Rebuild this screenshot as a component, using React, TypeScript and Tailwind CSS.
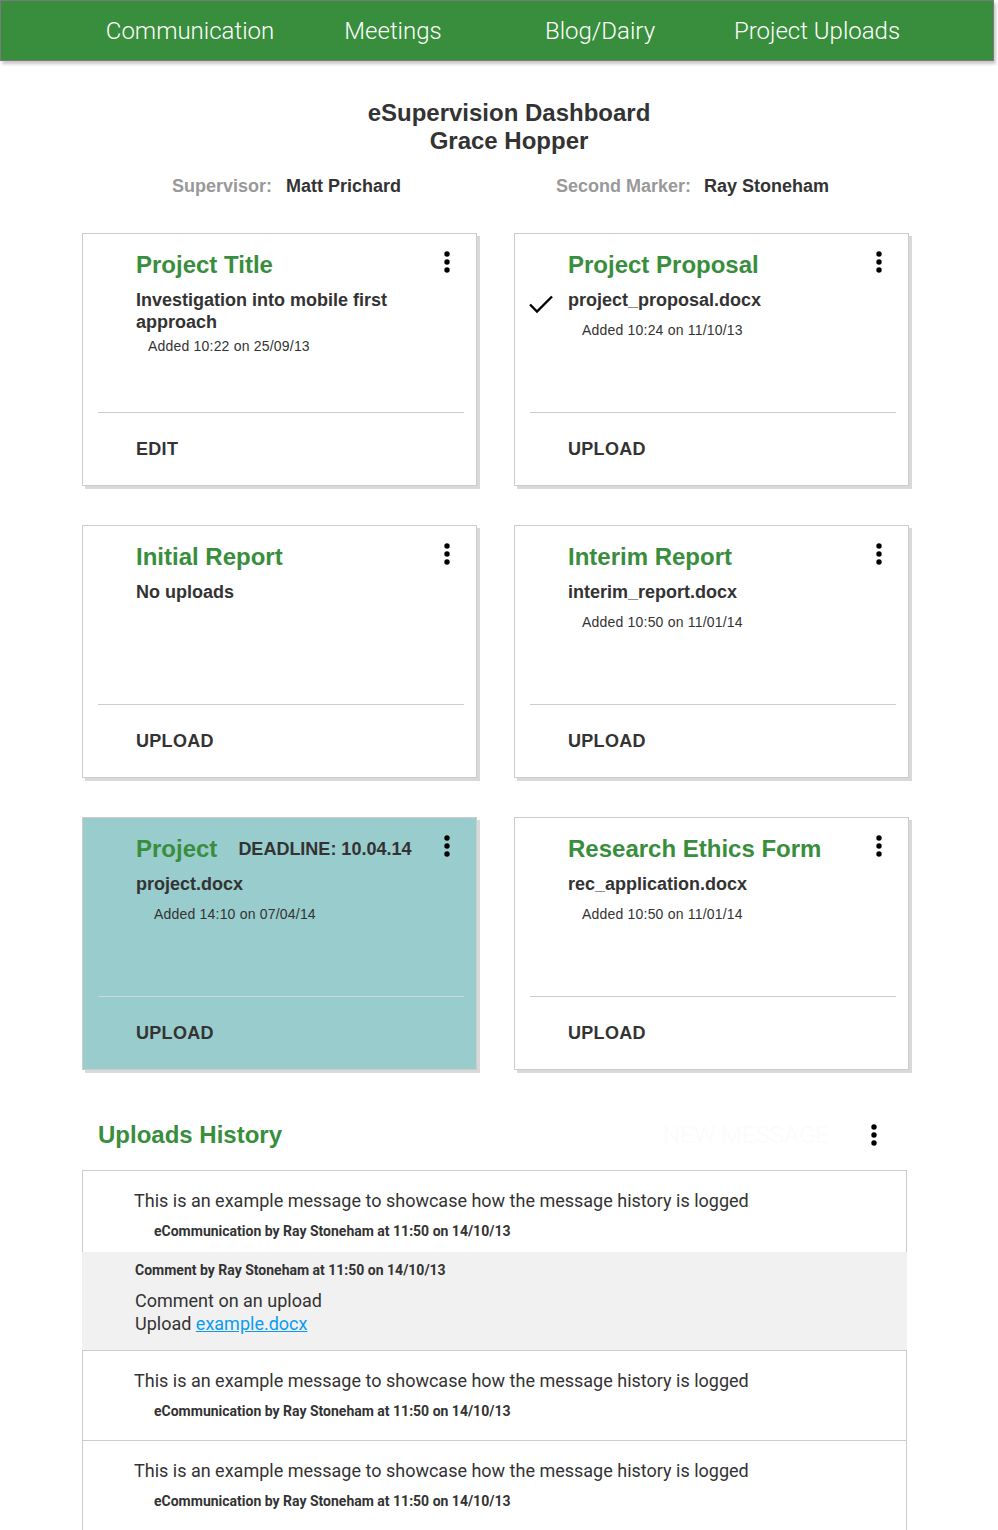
import React from 'react';

const ARIAL = "font-['Liberation_Sans',Arial,sans-serif]";
const ROBOTO = "font-['Roboto','Liberation_Sans',sans-serif]";

const Dots: React.FC = () => (
  <svg width="6" height="22" viewBox="0 0 6 22" className="shrink-0">
    <circle cx="3" cy="3" r="2.7" fill="#000" />
    <circle cx="3" cy="11" r="2.7" fill="#000" />
    <circle cx="3" cy="19" r="2.7" fill="#000" />
  </svg>
);

const Check: React.FC = () => (
  <svg width="26" height="20" viewBox="0 0 26 20" className="absolute left-[-40px] top-[5px]">
    <path d="M2 10.5 L9 17.5 L24 2.5" fill="none" stroke="#000" strokeWidth="2.4" />
  </svg>
);

type Card = {
  title: string;
  deadline?: string;
  lines: string[];
  added?: string;
  addedClass?: string;
  addedIndent: string;
  check?: boolean;
  action: string;
  teal?: boolean;
};

const cards: Card[] = [
  {
    title: 'Project Title',
    lines: ['Investigation into mobile first', 'approach'],
    added: 'Added 10:22 on 25/09/13',
    addedClass: 'mt-[4px]',
    addedIndent: 'pl-[12px]',
    action: 'EDIT',
  },
  {
    title: 'Project Proposal',
    lines: ['project_proposal.docx'],
    added: 'Added 10:24 on 11/10/13',
    addedClass: 'mt-[10px]',
    addedIndent: 'pl-[14px]',
    check: true,
    action: 'UPLOAD',
  },
  { title: 'Initial Report', lines: ['No uploads'], addedIndent: '', action: 'UPLOAD' },
  {
    title: 'Interim Report',
    lines: ['interim_report.docx'],
    added: 'Added 10:50 on 11/01/14',
    addedClass: 'mt-[10px]',
    addedIndent: 'pl-[14px]',
    action: 'UPLOAD',
  },
  {
    title: 'Project',
    deadline: 'DEADLINE: 10.04.14',
    lines: ['project.docx'],
    added: 'Added 14:10 on 07/04/14',
    addedClass: 'mt-[10px]',
    addedIndent: 'pl-[18px]',
    action: 'UPLOAD',
    teal: true,
  },
  {
    title: 'Research Ethics Form',
    lines: ['rec_application.docx'],
    added: 'Added 10:50 on 11/01/14',
    addedClass: 'mt-[10px]',
    addedIndent: 'pl-[14px]',
    action: 'UPLOAD',
  },
];

const DashCard: React.FC<{ card: Card }> = ({ card }) => (
  <div
    className={`h-[253px] flex flex-col border border-[#cccccc] shadow-[3px_3px_0_#d9d9d9] ${
      card.teal ? 'bg-[#99cccc]' : 'bg-white'
    } ${ARIAL} text-[#333333]`}
  >
    <div className="h-[178px]">
      <div className="flex items-start justify-between pl-[53px] pr-[26px] pt-[16px]">
        <div className="flex items-center">
          <h3 className="text-[24px] leading-[30px] font-bold text-[#388e3c]">{card.title}</h3>
          {card.deadline && (
            <span className="ml-[21px] text-[18px] leading-[30px] font-bold">{card.deadline}</span>
          )}
        </div>
        <div className="mt-[1px]">
          <Dots />
        </div>
      </div>
      <div className="pl-[53px] pr-[27px] mt-[9px]">
        <div className="relative">
          {card.check && <Check />}
          {card.lines.map((l) => (
            <p key={l} className="text-[18px] leading-[22px] font-bold">
              {l}
            </p>
          ))}
        </div>
        {card.added && (
          <p className={`${card.addedClass} ${card.addedIndent} text-[14px] leading-[18px] tracking-[0.2px]`}>
            {card.added}
          </p>
        )}
      </div>
    </div>
    <div className={`ml-[15px] mr-[12px] h-px ${card.teal ? 'bg-[#c8dada]' : 'bg-[#cccccc]'}`} />
    <div className="flex-1 flex items-center pl-[53px]">
      <span className="text-[18px] font-bold tracking-[0.3px]">{card.action}</span>
    </div>
  </div>
);

const Message: React.FC<{ last?: boolean; pb: string }> = ({ last, pb }) => (
  <div
    className={`border-x border-t border-[#cccccc] ${last ? 'border-b' : ''} bg-white pl-[51px] pt-[18px] ${pb}`}
  >
    <p className="text-[18px] leading-[24px] text-[#333333]">
      This is an example message to showcase how the message history is logged
    </p>
    <p className="mt-[9px] ml-[20px] text-[14px] leading-[18px] font-bold text-[#333333]">
      eCommunication by Ray Stoneham at 11:50 on 14/10/13
    </p>
  </div>
);

export default function App() {
  return (
    <div className="w-[998px] min-h-[1530px] bg-white overflow-hidden">
      <nav
        className={`w-[994px] h-[61px] bg-[#388e3c] border border-[#7a7a7a] shadow-[2px_3px_3px_rgba(0,0,0,0.22)] flex items-center ${ROBOTO} font-light text-white text-[24px]`}
      >
        <div className="w-[89px]" />
        <div className="w-[200px] text-center">Communication</div>
        <div className="w-[206px] text-center">Meetings</div>
        <div className="w-[208px] text-center">Blog/Dairy</div>
        <div className="w-[226px] text-center">Project Uploads</div>
      </nav>

      <header className={`${ARIAL} text-[#333333] mt-[38px]`}>
        <div className="pl-[20px] text-center text-[24px] leading-[28px] font-bold">
          <h1>eSupervision Dashboard</h1>
          <h2>Grace Hopper</h2>
        </div>
        <div className="mt-[20px] flex pl-[172px] text-[18px] leading-[22px] font-bold">
          <div className="w-[384px] flex gap-[14px]">
            <span className="text-[#999999]">Supervisor:</span>
            <span>Matt Prichard</span>
          </div>
          <div className="flex gap-[13px]">
            <span className="text-[#999999]">Second Marker:</span>
            <span>Ray Stoneham</span>
          </div>
        </div>
      </header>

      <main className="ml-[82px] w-[827px] mt-[36px] grid grid-cols-2 gap-x-[37px] gap-y-[39px]">
        {cards.map((c) => (
          <DashCard key={c.title} card={c} />
        ))}
      </main>

      <section className="mt-[47px]">
        <div className="ml-[98px] w-[779px] flex items-center justify-between">
          <h2 className={`${ARIAL} text-[24px] leading-[30px] font-bold text-[#388e3c]`}>Uploads History</h2>
          <div className="flex items-center gap-[42px]">
            <span className={`${ROBOTO} font-light text-[24px] text-[#fbfbfb]`}>NEW MESSAGE</span>
            <Dots />
          </div>
        </div>

        <div className={`ml-[82px] w-[825px] mt-[17px] ${ROBOTO}`}>
          <Message pb="pb-[12px]" />
          <div className="bg-[#f1f1f1] pl-[53px] pt-[9px] pb-[15px] text-[#333333]">
            <p className="text-[14px] leading-[18px] font-bold">Comment by Ray Stoneham at 11:50 on 14/10/13</p>
            <p className="mt-[10px] text-[18px] leading-[23px]">Comment on an upload</p>
            <p className="text-[18px] leading-[23px]">
              Upload{' '}
              <a href="#" className="text-[#0a9cf2] underline">
                example.docx
              </a>
            </p>
          </div>
          <Message pb="pb-[20px]" />
          <Message pb="pb-[20px]" last />
        </div>
      </section>
    </div>
  );
}
